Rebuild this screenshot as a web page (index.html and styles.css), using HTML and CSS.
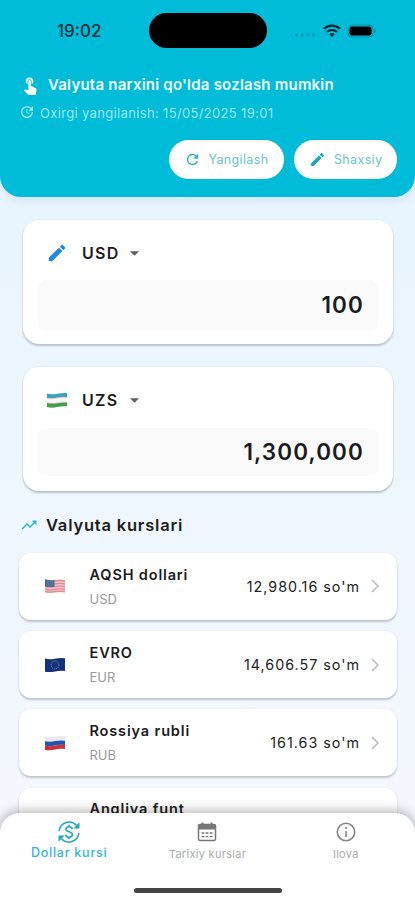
FILE: index.html
```html
<!DOCTYPE html>
<html lang="uz">
<head>
<meta charset="utf-8">
<meta name="viewport" content="width=device-width, initial-scale=1">
<title>Valyuta kurslari</title>
<link rel="stylesheet" href="styles.css">
</head>
<body>
<div class="screen">
  <header class="header">
    <div class="status">
      <span class="clock">19:02</span>
      <span class="island"></span>
      <span class="signals">
        <svg width="20" height="4" viewBox="0 0 20 4" fill="#0792a6"><circle cx="1.6" cy="2" r="1.4"/><circle cx="7.3" cy="2" r="1.4"/><circle cx="13" cy="2" r="1.4"/><circle cx="18.4" cy="2" r="1.4"/></svg>
        <svg class="wifi" width="18" height="14" viewBox="0 0 18 14" fill="none" stroke="#06242b" stroke-width="2.2"><path d="M1 4.8a11.5 11.5 0 0 1 16 0M4 8a7.2 7.2 0 0 1 10 0"/><path d="M9 13L6.3 10.3a4 4 0 0 1 5.4 0z" fill="#06242b" stroke="none"/></svg>
        <svg class="battery" width="30" height="14" viewBox="0 0 30 14"><rect x="1" y="1" width="25" height="12" rx="4" fill="none" stroke="#078fa3"/><rect x="2.500" y="2.500" width="22" height="9" rx="2.200" fill="#000"/><path d="M27.5 4.7c2 .9 2 3.7 0 4.6z" fill="#078fa3"/></svg>
      </span>
    </div>
    <div class="notice">
      <svg width="20" height="20" viewBox="0 0 24 24" fill="#fff"><path d="M9 11.24V7.5a2.5 2.5 0 0 1 5 0v3.74c1.21-.81 2-2.18 2-3.74C16 5.01 13.99 3 11.5 3S7 5.01 7 7.5c0 1.56.79 2.93 2 3.74zm9.84 4.63-4.54-2.26c-.17-.07-.35-.11-.54-.11H13v-6a1.5 1.5 0 0 0-3 0v10.74l-3.43-.72c-.08-.01-.15-.03-.24-.03-.31 0-.59.13-.79.33l-.79.8 4.94 4.94c.27.27.65.44 1.06.44h6.79c.75 0 1.33-.55 1.44-1.28l.75-5.27c.01-.07.02-.14.02-.2 0-.62-.38-1.16-.91-1.38z"/></svg>
      <span class="notice-text">Valyuta narxini qo'lda sozlash mumkin</span>
    </div>
    <div class="updated">
      <svg width="16" height="16" viewBox="0 0 24 24" fill="#a3e8f1"><path d="M21 10.12h-6.78l2.74-2.82c-2.73-2.7-7.15-2.8-9.88-.1-2.73 2.71-2.73 7.08 0 9.79s7.15 2.71 9.88 0C18.32 15.65 19 14.08 19 12.1h2c0 1.98-.88 4.55-2.64 6.29-3.51 3.48-9.21 3.48-12.72 0-3.5-3.47-3.53-9.11-.02-12.58s9.14-3.47 12.65 0L21 3v7.12zM12.5 8v4.25l3.5 2.08-.72 1.21L11 13V8h1.5z"/></svg>
      <span class="updated-text">Oxirgi yangilanish: 15/05/2025 19:01</span>
    </div>
    <div class="actions">
      <button class="pill pill-refresh"><svg width="17" height="17" viewBox="0 0 24 24" fill="#28afc4"><path d="M17.65 6.35A7.96 7.96 0 0 0 12 4a8 8 0 1 0 7.73 10h-2.08A6 6 0 1 1 12 6c1.66 0 3.14.69 4.22 1.78L13 11h7V4l-2.35 2.35z"/></svg><span>Yangilash</span></button>
      <button class="pill pill-edit"><svg width="17" height="17" viewBox="0 0 24 24" fill="#18a9bf"><path d="M3 17.25V21h3.75L17.81 9.94l-3.75-3.75L3 17.25zM20.71 7.04a1 1 0 0 0 0-1.41l-2.34-2.34a1 1 0 0 0-1.41 0l-1.83 1.83 3.75 3.75 1.83-1.83z"/></svg><span>Shaxsiy</span></button>
    </div>
  </header>

  <main class="content">
    <section class="converter">
      <div class="currency">
        <svg class="mark" width="22" height="22" viewBox="0 0 24 24" fill="#1e88e5"><path d="M3 17.25V21h3.75L17.81 9.94l-3.75-3.75L3 17.25zM20.71 7.04a1 1 0 0 0 0-1.41l-2.34-2.34a1 1 0 0 0-1.41 0l-1.83 1.83 3.75 3.75 1.83-1.83z"/></svg>
        <span class="code">USD</span>
        <svg width="9" height="5" viewBox="0 0 9 5"><path d="M0 .3h9L4.5 4.8z" fill="#5f5f5f"/></svg>
      </div>
      <div class="field">100</div>
    </section>
    <section class="converter converter-to">
      <div class="currency">
        <svg class="mark" width="22" height="16" viewBox="0 0 22 16"><path d="M1 1.6q5 1.2 10 .1T21 1v4.3q-5-.5-10 .5T1 6z" fill="#35a5c4"/><path d="M1 6q5 1 10-.2t10-.5v5.2q-5-.3-10 .7T1 11z" fill="#f2f6f4"/><path d="M1 11q5 1.1 10 .2t10-.7v3.800q-5-.5-10 .8T1 15z" fill="#43a047"/><path d="M1 6q5 1 10-.2t10-.5M1 11q5 1.1 10 .2t10-.7" fill="none" stroke="#d98888" stroke-width=".5"/></svg>
        <span class="code">UZS</span>
        <svg width="9" height="5" viewBox="0 0 9 5"><path d="M0 .3h9L4.5 4.8z" fill="#5f5f5f"/></svg>
      </div>
      <div class="field">1,300,000</div>
    </section>

    <h2 class="heading">
      <svg width="18" height="18" viewBox="0 0 24 24" fill="#26b5d0"><path d="m16 6 2.29 2.29-4.88 4.88-4-4L2 16.59 3.41 18l6-6 4 4 6.3-6.29L22 12V6z"/></svg>
      <span>Valyuta kurslari</span>
    </h2>

    <div class="rates">
      <article class="rate">
        <svg class="flag" width="22" height="16" viewBox="0 0 22 16"><path d="M1 1.3q5 1.3 10 .4t10 .1v12.7q-5-1-10 0T1 14z" fill="#f3c3c6"/><path d="M1 2.7q5 1.2 10 .3t10 0M1 5.5q5 1.2 10 .3t10 0M1 8.3q5 1.2 10 .3t10 0M1 11.1q5 1.2 10 .3t10 0M1 13.5q5 1 10 .2t10 0" fill="none" stroke="#dc8c92" stroke-width="1.3"/><path d="M1 1.3q5 1.3 9.5.6v6.8Q6 9.4 1 8.5z" fill="#456b9d"/><path d="M2.5 3.5h7M2.5 5.3h7M2.5 7.1h7" stroke="#8ea7c8" stroke-width=".6" stroke-dasharray=".7 1"/></svg>
        <div class="name"><b>AQSH dollari</b><small>USD</small></div>
        <span class="value">12,980.16 so'm</span>
        <svg class="chevron" width="8" height="14" viewBox="0 0 8 14"><path d="M1 1l6 6-6 6"/></svg>
      </article>
      <article class="rate">
        <svg class="flag" width="22" height="16" viewBox="0 0 22 16"><path d="M1 1.6q5 1.2 10 .1T21 1.3v12.6q-5-.7-10 .5T1 14.7z" fill="#123181"/><circle cx="11" cy="8" r="3.9" fill="none" stroke="#aaa35c" stroke-width="1" stroke-dasharray="1 1.04"/></svg>
        <div class="name"><b>EVRO</b><small>EUR</small></div>
        <span class="value">14,606.57 so'm</span>
        <svg class="chevron" width="8" height="14" viewBox="0 0 8 14"><path d="M1 1l6 6-6 6"/></svg>
      </article>
      <article class="rate">
        <svg class="flag" width="22" height="16" viewBox="0 0 22 16"><path d="M1 1.6q5 1.2 10 .1T21 1.3v4.4q-5-.7-10 .4T1 6.3z" fill="#e8eaee"/><path d="M1 6.3q5 .9 10-.2t10-.4V10q-5-.7-10 .5T1 10.6z" fill="#2454b3"/><path d="M1 10.6q5 1.1 10-.1t10-.5v4q-5-.8-10 .5t-10 .4z" fill="#cf3030"/></svg>
        <div class="name"><b>Rossiya rubli</b><small>RUB</small></div>
        <span class="value">161.63 so'm</span>
        <svg class="chevron" width="8" height="14" viewBox="0 0 8 14"><path d="M1 1l6 6-6 6"/></svg>
      </article>
      <article class="rate">
        <span class="flag"></span>
        <div class="name"><b>Angliya funt</b><small>GBP</small></div>
      </article>
    </div>
  </main>

  <nav class="tabs">
    <a class="tab tab-active">
      <svg width="24" height="24" viewBox="0 0 24 24" fill="none" stroke="#22a9c0" stroke-width="1.6"><path d="M2.2 11A10 10 0 0 1 19.5 5.3M21.8 13A10 10 0 0 1 4.5 18.7"/><path d="M22.5 2.2v6.3h-6.2zM1.5 21.8v-6.3h6.2z" fill="#22a9c0" stroke="none"/><path d="M15.3 9c-.4-1.5-1.6-2.2-3.2-2.2-1.8 0-3.1.9-3.1 2.4 0 3.5 6.4 1.8 6.4 5.4 0 1.6-1.3 2.6-3.3 2.6-1.9 0-3.1-.9-3.500-2.500M12 4.8v2M12 17.2v2"/></svg>
      <span>Dollar kursi</span>
    </a>
    <a class="tab">
      <svg width="24" height="24" viewBox="0 0 24 24"><path d="M5 4.500h14a1.500 1.500 0 0 1 1.500 1.500v13a1.500 1.500 0 0 1-1.500 1.500H5A1.500 1.500 0 0 1 3.500 19V6A1.500 1.500 0 0 1 5 4.500z" fill="none" stroke="#777" stroke-width="1.500"/><path d="M3.500 4.500h17v5h-17zM6.500 2.500h2v3h-2zM15.500 2.500h2v3h-2z" fill="#777"/><path d="M6.500 13h11M6.500 16.700h11" stroke="#777" stroke-width="1.300" stroke-dasharray="2.800 1.300"/></svg>
      <span>Tarixiy kurslar</span>
    </a>
    <a class="tab">
      <svg width="24" height="24" viewBox="0 0 24 24" fill="#858585"><path d="M11.200 7h1.600v2h-1.600zm0 4h1.600v6h-1.600zm.8-8.500a9.500 9.500 0 1 0 0 19 9.500 9.500 0 0 0 0-19zm0 17.400a7.900 7.900 0 1 1 0-15.800 7.900 7.900 0 0 1 0 15.800z"/></svg>
      <span>Ilova</span>
    </a>
    <i class="home"></i>
  </nav>
</div>
</body>
</html>
```
FILE: styles.css
```css
* { box-sizing: border-box; }
body { margin: 0; font-family: Inter, "Liberation Sans", sans-serif; color: #1c1c1c; }
svg { display: block; flex: none; }
.screen {
  height: 900px; overflow: hidden; display: flex; flex-direction: column; position: relative;
  background: linear-gradient(180deg, #e7f4fe 0, #e9f5fe 250px, #eff6fe 550px, #f4f7fe 810px);
}
.header {
  flex: none; height: 197px; background: #00bcd8; border-radius: 0 0 21px 21px;
  box-shadow: 0 3px 9px rgba(70, 110, 150, .14);
}
.status { height: 61px; display: grid; grid-template-columns: 149px 118px 1fr; align-items: center; }
.clock { padding-left: 57px; font-size: 17px; font-weight: 500; color: #06313a; }
.island { height: 35px; border-radius: 18px; background: #000; }
.signals { display: flex; align-items: center; padding-left: 28px; }
.signals > svg:first-child { margin-top: 8px; }
.wifi { margin-left: 8px; }
.battery { margin-left: 6px; }
.notice { display: flex; align-items: center; height: 20px; margin-top: 14px; padding-left: 20px; }
.notice-text { margin: -1px 0 0 8px; font-size: 15px; font-weight: 600; letter-spacing: .22px; color: #eefcff; white-space: nowrap; }
.updated { display: flex; align-items: center; height: 16px; margin-top: 9px; padding-left: 19px; }
.updated-text { margin: 1px 0 0 5px; font-size: 13px; letter-spacing: .34px; color: #9be6ef; white-space: nowrap; }
.actions { display: flex; gap: 10.500px; justify-content: flex-end; margin-top: 20px; padding-right: 18px; }
.pill {
  display: flex; align-items: center; height: 39px; border: 0; border-radius: 20px; background: #fff;
  padding: 0; font: 400 12.500px Inter, sans-serif; letter-spacing: .35px; color: #68c3cf;
}
.pill-refresh { width: 115px; padding-left: 15px; gap: 8px; }
.pill-edit { width: 103px; padding-left: 15px; gap: 8px; }
.content { padding: 23px 18px 0 19px; }
.converter {
  height: 124px; margin: 0 4px; padding: 16px 15px 0; background: #fff; border-radius: 16px;
  box-shadow: 0 2px 2px rgba(90, 100, 110, .33), 0 0 2px rgba(90, 100, 110, .12);
}
.converter-to { margin-top: 23px; }
.currency { display: flex; align-items: center; height: 34px; padding-left: 8px; }
.mark { width: 22px; }
.code { width: 38px; margin: 0 10px 0 14px; font-size: 16px; font-weight: 600; letter-spacing: 1.300px; }
.field {
  display: flex; align-items: center; justify-content: flex-end; height: 50px; margin-top: 10px; padding: 0 14px 1px 0;
  border-radius: 7px; background: #fafafa; font-size: 22.500px; font-weight: 600; letter-spacing: 1.100px;
}
.converter-to .field { height: 48px; margin-top: 11px; }
.heading { display: flex; align-items: center; gap: 8px; height: 24px; margin: 22px 0 16px 1px; font-size: 16.500px; font-weight: 600; letter-spacing: .8px; }
.rates { display: grid; gap: 11.500px; }
.rate {
  display: flex; align-items: center; height: 66.700px; padding: 0 18px 0 25px; background: #fff; border-radius: 12px;
  box-shadow: 0 2px 2px rgba(90, 100, 110, .32), 0 0 2px rgba(90, 100, 110, .1);
}
.flag { width: 22px; flex: none; }
.name { flex: 1; margin-left: 23.500px; }
.name b { display: block; font-size: 14.500px; line-height: 20px; font-weight: 600; letter-spacing: .85px; }
.name small { display: block; margin-top: 5px; font-size: 13px; line-height: 18px; color: #999; }
.value { font-size: 14.300px; font-weight: 400; letter-spacing: 1px; color: #222; }
.chevron { margin-left: 11px; fill: none; stroke: #b9b9b9; stroke-width: 1.500; }
.tabs {
  position: absolute; left: 0; right: 0; bottom: 0; height: 87px; display: grid; grid-template-columns: repeat(3, 1fr);
  background: #fff; border-radius: 20px 20px 0 0; box-shadow: 0 -2px 12px rgba(0, 0, 0, .3);
}
.tab { display: flex; flex-direction: column; align-items: center; padding-top: 7px; font-size: 11px; letter-spacing: .3px; color: #aaa; }
.tab span { margin-top: 3px; line-height: 14px; white-space: nowrap; }
.tab-active { font-size: 12.500px; font-weight: 500; letter-spacing: .75px; color: #30b8ce; }
.tab-active span { margin-top: 2px; }
.home { position: absolute; left: 134px; bottom: 7px; width: 148px; height: 5px; border-radius: 3px; background: #444; }
```
